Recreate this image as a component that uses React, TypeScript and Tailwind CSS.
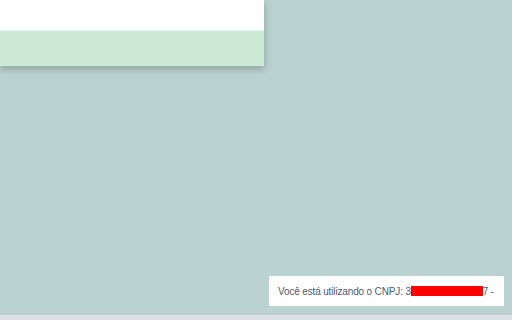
export default function App() {
  return (
    <div
      className="relative flex h-[320px] w-[512px] flex-col overflow-hidden bg-[#bbd3d0]"
      style={{ fontFamily: '"Liberation Sans", Arial, sans-serif' }}
    >
      <div className="flex-grow">
        <div className="w-[264px] shadow-[0_3px_8px_rgba(0,0,0,0.25)]">
          <div className="h-[30px] bg-white" />
          <div className="h-[36px] border-t border-[#e2f2e6] bg-[#cdebd4]" />
        </div>
      </div>
      <div className="flex justify-end pb-2 pr-2">
        <div className="flex h-[30px] w-[235px] items-center whitespace-nowrap bg-white pl-[9px] text-[10px] tracking-[-0.15px] text-[#505a6b]">
          <span className="shrink-0">Você está utilizando o CNPJ: 3</span>
          <span className="h-[10px] w-[72px] shrink-0 bg-[#ff0000]" />
          <span className="shrink-0">7 -</span>
        </div>
      </div>
      <div className="h-[6px] border-t border-[#c4c9d6] bg-[#dde1ea]" />
    </div>
  );
}
